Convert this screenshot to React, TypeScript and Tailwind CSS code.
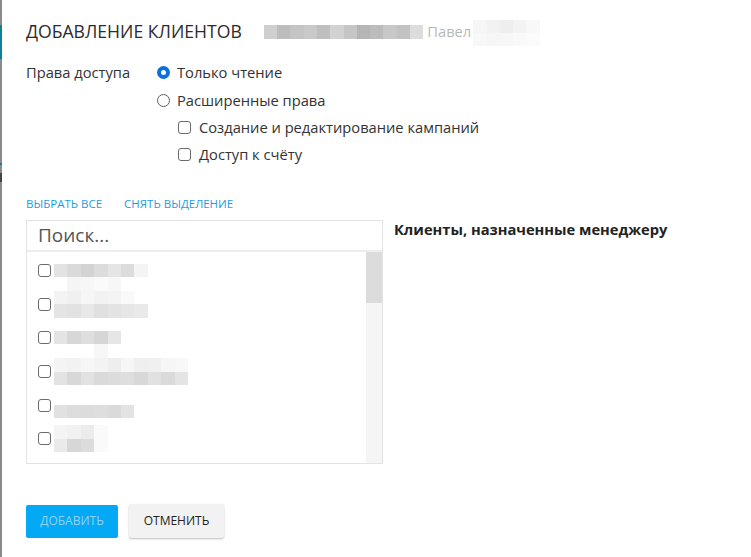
import React from 'react';

type Cells = string[][];

const TITLE_BLUR: Cells = [
  ['#cfcfcf', '#bdbdbd', '#c4c4c4', '#c9c9c9', '#bfbfbf', '#d2d2d2', '#c6c6c6', '#b5b5b5', '#bcbcbc', '#c8c8c8', '#c3c3c3', '#dcdcdc'],
];

const NAME_BLUR: Cells = [
  ['#f6f6f6', '#f2f2f2', '#eeeeee', '#f3f3f3', '#f8f8f8'],
  ['#f8f8f8', '#f6f6f6', '#f7f7f7', '#f9f9f9', '#fbfbfb'],
];

const CLIENTS: { cells: Cells; offset: number }[] = [
  {
    offset: 0,
    cells: [
      ['#e3e3e3', '#dadada', '#d3d3d3', '#dcdcdc', '#e5e5e5', '#dcdcdc', '#f4f4f4'],
      ['#fff', '#f5f5f5', '#f7f7f7', '#fafafa', '#f7f7f7', '#fff', '#fff'],
    ],
  },
  {
    offset: 1,
    cells: [
      ['#f3f3f3', '#f0f0f0', '#f6f6f6', '#f2f2f2', '#f4f4f4', '#f9f9f9', '#fff'],
      ['#e4e4e4', '#e2e2e2', '#e8e8e8', '#e0e0e0', '#e3e3e3', '#e6e6e6', '#e9e9e9'],
    ],
  },
  {
    offset: 0,
    cells: [
      ['#e4e4e4', '#d7d7d7', '#dedede', '#d6d6d6', '#e6e6e6'],
      ['#fff', '#fff', '#fff', '#f7f7f7', '#fff'],
    ],
  },
  {
    offset: 1,
    cells: [
      ['#f4f4f4', '#f2f2f2', '#f6f6f6', '#f3f3f3', '#eeeeee', '#f6f6f6', '#efefef', '#f0f0f0', '#f6f6f6', '#f8f8f8'],
      ['#e3e3e3', '#d8d8d8', '#e2e2e2', '#dadada', '#dcdcdc', '#dedede', '#d8d8d8', '#e1e1e1', '#dadada', '#e4e4e4'],
    ],
  },
  {
    offset: 0,
    cells: [
      ['#e1e1e1', '#dddddd', '#dcdcdc', '#dedede', '#dadada', '#e3e3e3'],
    ],
  },
  {
    offset: 1,
    cells: [
      ['#f4f4f4', '#f1f1f1', '#ececec', '#fafafa'],
      ['#eaeaea', '#d7d7d7', '#dcdcdc', '#fafafa'],
    ],
  },
];

function Pixels({ cells, size = 13 }: { cells: Cells; size?: number }) {
  return (
    <div className="flex flex-col">
      {cells.map((row, r) => (
        <div key={r} className="flex">
          {row.map((c, i) => (
            <span key={i} style={{ backgroundColor: c, width: size, height: size }} />
          ))}
        </div>
      ))}
    </div>
  );
}

function Radio({ checked }: { checked?: boolean }) {
  return checked ? (
    <span className="w-[13px] h-[13px] rounded-full bg-[#0b6fde] flex items-center justify-center shrink-0">
      <span className="w-[5px] h-[5px] rounded-full bg-white" />
    </span>
  ) : (
    <span className="w-[13px] h-[13px] rounded-full border border-[#5f5f5f] bg-white shrink-0" />
  );
}

function Checkbox() {
  return <span className="w-[13px] h-[13px] rounded-[3px] border border-[#6b6b6b] bg-white shrink-0" />;
}

export default function App() {
  return (
    <div
      className="w-[751px] h-[557px] bg-white relative overflow-hidden text-[#333]"
      style={{ fontFamily: '"Open Sans", "Noto Sans", sans-serif' }}
    >
      <div className="absolute left-0 top-0 bottom-0 w-[2px] bg-[#8a8a8a]" />
      <div className="absolute left-0 top-[25px] h-[34px] w-[2px] bg-[#117f9a]" />
      <div className="absolute left-0 top-[163px] h-[2px] w-[2px] bg-[#117f9a]" />
      <div className="absolute left-0 top-[173px] h-[9px] w-[2px] bg-[#444]" />

      <div className="pl-[26px] pt-[19px]">
        <div className="flex items-center h-[24px]">
          <h1 className="text-[17.6px] leading-[24px] font-normal text-[#2b2b2b]">ДОБАВЛЕНИЕ КЛИЕНТОВ</h1>
          <div className="ml-[22px] mt-[2px]">
            <Pixels cells={TITLE_BLUR} size={13.3} />
          </div>
          <span className="ml-[4px] text-[14.7px] text-[#b8b8b8]">Павел</span>
          <div className="ml-[2px] mt-[4px]">
            <Pixels cells={NAME_BLUR} size={13.3} />
          </div>
        </div>

        <div className="flex mt-[19px] text-[14.7px]">
          <div className="w-[131px] leading-[20px]">Права доступа</div>
          <div className="flex flex-col">
            <label className="flex items-center gap-[7px] h-[20px]">
              <Radio checked />
              <span>Только чтение</span>
            </label>
            <label className="flex items-center gap-[7px] h-[20px] mt-[8px]">
              <Radio />
              <span>Расширенные права</span>
            </label>
            <label className="flex items-center gap-[8px] h-[20px] mt-[7px] ml-[21px]">
              <Checkbox />
              <span>Создание и редактирование кампаний</span>
            </label>
            <label className="flex items-center gap-[8px] h-[20px] mt-[7px] ml-[21px]">
              <Checkbox />
              <span>Доступ к счёту</span>
            </label>
          </div>
        </div>

        <div className="flex gap-[22px] mt-[32px] text-[11.5px] leading-[16px] text-[#1c9ee0]">
          <span>ВЫБРАТЬ ВСЕ</span>
          <span>СНЯТЬ ВЫДЕЛЕНИЕ</span>
        </div>

        <div className="flex mt-[8px]">
          <div className="w-[357px] h-[244px] border border-[#e3e3e3] flex flex-col">
            <div className="h-[31px] border-b-2 border-[#ededed] flex items-center pl-[11px] text-[19px] text-[#555]">
              Поиск...
            </div>
            <div className="flex flex-1 min-h-0">
              <div className="flex-1 flex flex-col pl-[11px] pt-[2px]">
                {CLIENTS.map((c, i) => (
                  <div key={i} className="flex items-center h-[33.6px]">
                    <Checkbox />
                    <div className="ml-[3px]" style={{ marginTop: c.offset ? 0 : 13 }}>
                      <Pixels cells={c.cells} size={13.4} />
                    </div>
                  </div>
                ))}
              </div>
              <div className="w-[16px] bg-[#f5f5f5] flex flex-col">
                <div className="h-[51px] bg-[#dcdcdc]" />
              </div>
            </div>
          </div>
          <div className="ml-[11px] mt-[-1px] text-[14.7px] font-bold text-[#222] leading-[20px]">
            Клиенты, назначенные менеджеру
          </div>
        </div>

        <div className="flex gap-[11px] mt-[40px] items-center">
          <button className="w-[92px] h-[33px] bg-[#03a9f4] rounded-[2px] text-[12px] text-[#8fd3f3]">
            ДОБАВИТЬ
          </button>
          <button className="w-[95px] h-[34px] bg-[#f2f2f2] rounded-[2px] text-[12px] text-[#222] shadow-[0_1px_2px_rgba(0,0,0,0.25)]">
            ОТМЕНИТЬ
          </button>
        </div>
      </div>
    </div>
  );
}
